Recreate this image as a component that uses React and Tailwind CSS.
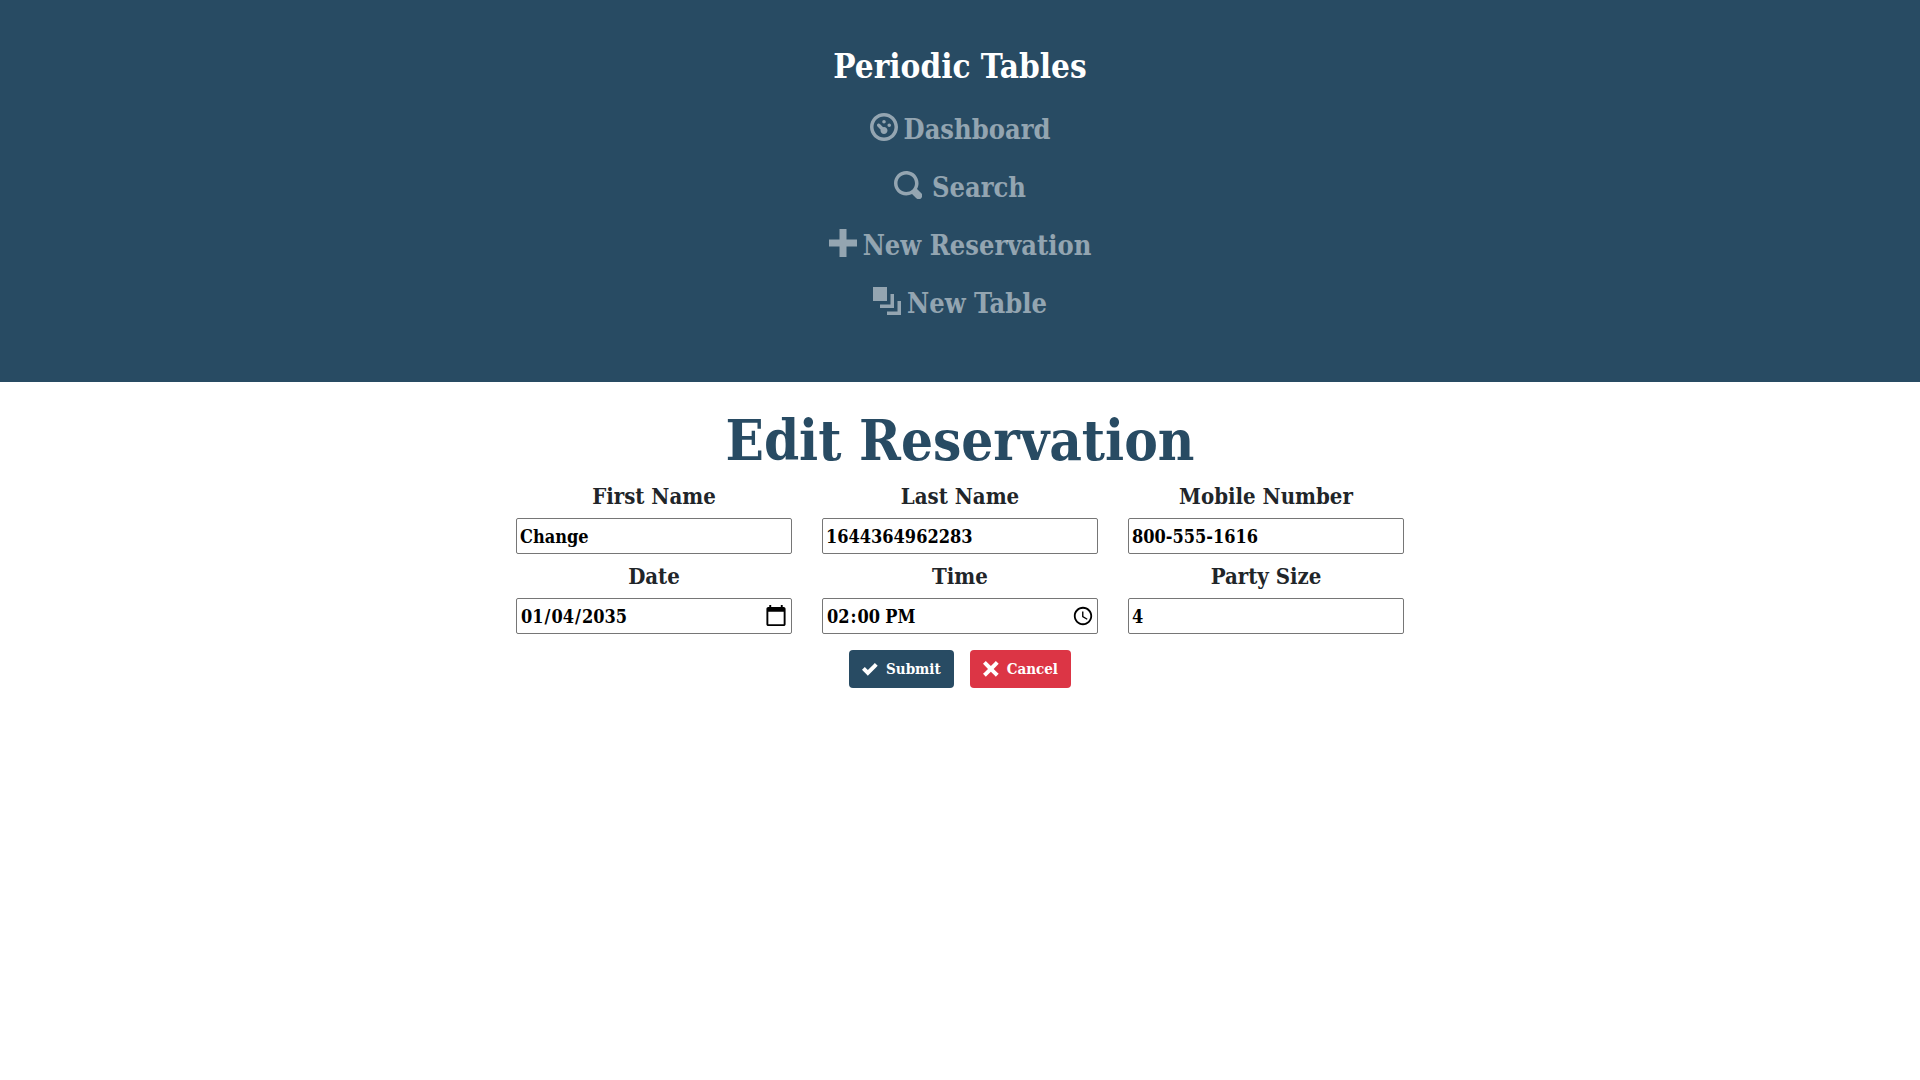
const ICONS = {
  dial: "M4 0c-2.2 0-4 1.8-4 4s1.8 4 4 4 4-1.8 4-4-1.8-4-4-4zm0 1c1.66 0 3 1.34 3 3s-1.34 3-3 3-3-1.34-3-3 1.34-3 3-3zm0 1c-.28 0-.5.22-.5.5s.22.5.5.5.5-.22.5-.5-.22-.5-.5-.5zm-1.66 1a.5.5 0 0 0-.19.84l.91.91c-.02.08-.06.16-.06.25 0 .55.45 1 1 1s1-.45 1-1-.45-1-1-1c-.09 0-.17.04-.25.06l-.91-.91a.5.5 0 0 0-.44-.16.5.5 0 0 0-.06 0zm3.16 0c-.28 0-.5.22-.5.5s.22.5.5.5.5-.22.5-.5-.22-.5-.5-.5z",
  search:
    "M3.5 0c-1.93 0-3.5 1.57-3.5 3.5s1.57 3.5 3.5 3.5c.59 0 1.17-.14 1.66-.41a1 1 0 0 0 .13.13l1 1a1.02 1.02 0 1 0 1.44-1.44l-1-1a1 1 0 0 0-.16-.13c.27-.49.44-1.06.44-1.66 0-1.93-1.55-3.5-3.5-3.5zm0 1c1.39 0 2.5 1.11 2.5 2.5 0 .66-.24 1.27-.66 1.72-.01.01-.02.02-.03.03a1 1 0 0 0-.13.13c-.44.4-1.04.63-1.69.63-1.39 0-2.5-1.11-2.5-2.5s1.11-2.5 2.5-2.5z",
  plus: "M3 0v3h-3v2h3v3h2v-3h3v-2h-3v-3h-2z",
  layers: "M0 0v4h4v-4h-4zm5 2v3h-3v1h4v-4h-1zm2 2v3h-3v1h4v-4h-1z",
  check:
    "M6.41 1l-.69.72-2.78 2.78-.81-.78-.72-.72-1.41 1.41.72.72 1.5 1.5.69.72.72-.72 3.5-3.5.72-.72-1.41-1.41z",
  x: "M1.41 0l-1.41 1.41.72.72 1.78 1.81-1.78 1.78-.72.69 1.41 1.44.72-.72 1.81-1.81 1.78 1.81.69.72 1.44-1.44-.72-.69-1.81-1.78 1.81-1.81.72-.72-1.44-1.41-.69.72-1.78 1.78-1.81-1.78-.72-.72z",
};

function Icon({ name, className }) {
  return (
    <svg viewBox="0 0 8 8" fill="currentColor" aria-hidden="true" className={className}>
      <path d={ICONS[name]} />
    </svg>
  );
}

const LINKS = [
  { icon: "dial", label: "Dashboard", gap: "gap-1.5" },
  { icon: "search", label: "Search", gap: "gap-2.5" },
  { icon: "plus", label: "New Reservation", gap: "gap-1.5" },
  { icon: "layers", label: "New Table", gap: "gap-1.5" },
];

const FIELDS = [
  { id: "first_name", label: "First Name", type: "text", value: "Change" },
  { id: "last_name", label: "Last Name", type: "text", value: "1644364962283" },
  { id: "mobile_number", label: "Mobile Number", type: "tel", value: "800-555-1616" },
  {
    id: "reservation_date",
    label: "Date",
    type: "date",
    value: "2035-01-04",
    picker: "[&::-webkit-calendar-picker-indicator]:size-6 [&::-webkit-calendar-picker-indicator]:p-0",
  },
  {
    id: "reservation_time",
    label: "Time",
    type: "time",
    value: "14:00",
    picker: "[&::-webkit-calendar-picker-indicator]:size-[22px] [&::-webkit-calendar-picker-indicator]:p-0",
  },
  { id: "people", label: "Party Size", type: "text", value: "4" },
];

export default function App() {
  return (
    <div className="min-h-screen bg-white font-['Roboto_Slab','DejaVu_Serif_Condensed','DejaVu_Serif',serif] font-bold text-[#212529]">
      <header className="flex flex-col items-center bg-[#284b63] pt-10 pb-[49px]">
        <a href="#" className="text-[33px] leading-[54px] text-white">
          Periodic Tables
        </a>
        <nav aria-label="Main" className="mt-[7px]">
          <ul className="flex flex-col items-center">
            {LINKS.map((link) => (
              <li key={link.label}>
                <a href="#" className={`flex h-[58px] items-center text-[27px] text-white/50 ${link.gap}`}>
                  <Icon name={link.icon} className="mb-1.5 size-7" />
                  {link.label}
                </a>
              </li>
            ))}
          </ul>
        </nav>
      </header>

      <main className="mx-auto w-full max-w-[948px] px-[30px] pt-5">
        <h1 className="text-center text-[56px] leading-[76px] text-[#284b63]">Edit Reservation</h1>
        <form onSubmit={(e) => e.preventDefault()}>
          <div className="grid grid-cols-3 gap-x-[30px] gap-y-1">
            {FIELDS.map((f) => (
              <div key={f.id} className="flex flex-col gap-1">
                <label htmlFor={f.id} className="text-center text-[22px] leading-9">
                  {f.label}
                </label>
                <input
                  id={f.id}
                  type={f.type}
                  defaultValue={f.value}
                  className={`h-9 w-full rounded-[2px] border border-[#767676] bg-white px-[3px] text-[18px] text-black ${f.picker ?? ""}`}
                />
              </div>
            ))}
          </div>
          <div className="mt-4 flex justify-center gap-4">
            <button
              type="submit"
              className="flex h-[38px] items-center gap-2 rounded bg-[#284b63] px-[13px] text-[15px] text-white"
            >
              <Icon name="check" className="size-4" />
              Submit
            </button>
            <button
              type="button"
              className="flex h-[38px] items-center gap-2 rounded bg-[#dc3545] px-[13px] text-[15px] text-white"
            >
              <Icon name="x" className="size-4" />
              Cancel
            </button>
          </div>
        </form>
      </main>
    </div>
  );
}
